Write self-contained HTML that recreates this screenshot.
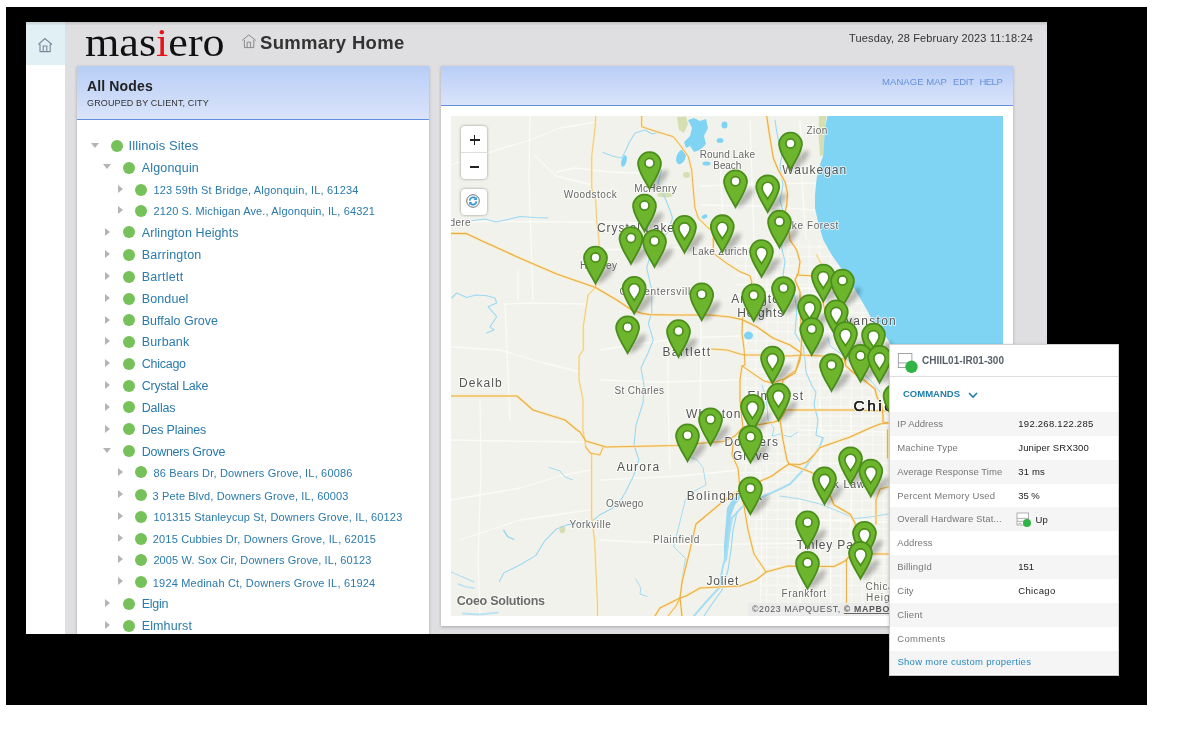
<!DOCTYPE html>
<html><head><meta charset="utf-8"><title>Summary Home</title>
<style>
html,body{margin:0;padding:0}
html{overflow:hidden}
body{width:1200px;height:750px;background:#fff;position:relative;overflow:hidden;font-family:"Liberation Sans",sans-serif}
.t{position:absolute;white-space:nowrap}
.abs{position:absolute}
#black{position:absolute;left:6px;top:7px;width:1141px;height:698px;background:#000}
#app{position:absolute;left:26px;top:22px;width:1021px;height:612px;background:#dfdfe1;overflow:hidden}
#side{position:absolute;left:0;top:0;width:39px;height:612px;background:#fff}
#sidehl{position:absolute;left:0;top:0;width:39px;height:43px;background:#e1f0f5}
.panel{position:absolute;background:#fff;box-shadow:0 1px 3px rgba(0,0,0,.25)}
.phead{position:absolute;left:0;top:0;right:0;background:linear-gradient(#b8cdf6,#dae4fa);border-bottom:1px solid #5f8fdd}
.dot{position:absolute;width:12px;height:12px;border-radius:50%;background:#76c15a}
.ar{position:absolute;width:0;height:0;border-style:solid}
.ar.r{border-width:4.4px 0 4.4px 5.3px;border-color:transparent transparent transparent #b4b4b4}
.ar.d{border-width:5.3px 4.6px 0 4.6px;border-color:#b4b4b4 transparent transparent transparent}
#popup{position:absolute;left:889px;top:344px;width:228px;height:330px;background:#fff;border:1px solid #d0d0d0;border-bottom-color:#c2c2c2;box-shadow:0 1px 3px rgba(0,0,0,.22)}
.row{position:absolute;left:0;width:228px;background:#f5f5f5}
#wrap{position:absolute;left:0;top:0;width:1200px;height:750px;will-change:transform}
</style></head><body>
<div id="wrap">
<div id="black"></div>
<div id="app">
<div id="side"></div><div id="sidehl"></div>

<div class="abs" style="left:0;top:0;width:1021px;height:3px;background:linear-gradient(rgba(0,0,0,.13),rgba(0,0,0,.03))"></div>
<svg class="abs" style="left:11px;top:15px" width="17" height="17" viewBox="0 0 17 17"><path d="M1.4 7.5 L7.8 1.5 L15 7.5 M3 7 V14.6 H13.2 V7 M6.2 14.6 V9 H9.8 V14.6" fill="none" stroke="#7b8997" stroke-width="1.1"/></svg>
<div class="t" style="left:59.2px;top:-5.2px;font-family:'Liberation Serif',serif;font-size:41px;line-height:50px;color:#111;transform:scaleX(1.076);transform-origin:0 0">mas<span style="color:#e8141c">i</span>ero</div>
<svg class="abs" style="left:215px;top:12px" width="17" height="17" viewBox="0 0 17 17"><path d="M1.2 6.5 L7.8 0.9 L14.8 6.5 M3.4 6 V13.6 H12.8 V6 M6.2 13.6 V8.2 H9.6 V13.6" fill="none" stroke="#858585" stroke-width=".95"/></svg>
<div class="t" style="left:234.0px;top:7.5px;font-size:18.5px;line-height:26px;color:#333;font-weight:700;letter-spacing:0.304px;">Summary Home</div>
<div class="t" style="left:823.0px;top:8.5px;font-size:11px;line-height:15px;color:#333;letter-spacing:0.148px;">Tuesday, 28 February 2023 11:18:24</div>
<div class="panel" style="left:51px;top:44px;width:352px;height:600px"><div class="phead" style="height:53px"></div></div>
<div class="t" style="left:61.0px;top:53.9px;font-size:14px;line-height:20px;color:#222;font-weight:700;letter-spacing:0.137px;">All Nodes</div>
<div class="t" style="left:61.0px;top:74.5px;font-size:9px;line-height:13px;color:#333;letter-spacing:0.128px;">GROUPED BY CLIENT, CITY</div>
<div class="ar d" style="left:64.9px;top:120.7px"></div>
<div class="dot" style="left:85.0px;top:118.0px"></div>
<div class="t" style="left:102.5px;top:115.2px;font-size:13px;line-height:18px;color:#2a7aab;letter-spacing:0.090px;">Illinois Sites</div>
<div class="ar d" style="left:76.9px;top:142.3px"></div>
<div class="dot" style="left:97.0px;top:139.6px"></div>
<div class="t" style="left:115.7px;top:136.6px;font-size:12.5px;line-height:18px;color:#2a7aab;letter-spacing:0.188px;">Algonquin</div>
<div class="ar r" style="left:91.7px;top:163.2px"></div>
<div class="dot" style="left:109.0px;top:162.0px"></div>
<div class="t" style="left:127.4px;top:160.7px;font-size:11px;line-height:15px;color:#2a7aab;letter-spacing:0.191px;">123 59th St Bridge, Algonquin, IL, 61234</div>
<div class="ar r" style="left:91.7px;top:184.2px"></div>
<div class="dot" style="left:109.0px;top:183.0px"></div>
<div class="t" style="left:127.4px;top:181.6px;font-size:11px;line-height:15px;color:#2a7aab;letter-spacing:0.138px;">2120 S. Michigan Ave., Algonquin, IL, 64321</div>
<div class="ar r" style="left:79.2px;top:205.6px"></div>
<div class="dot" style="left:97.0px;top:204.4px"></div>
<div class="t" style="left:115.7px;top:201.8px;font-size:12.5px;line-height:18px;color:#2a7aab;letter-spacing:0.101px;">Arlington Heights</div>
<div class="ar r" style="left:79.2px;top:227.7px"></div>
<div class="dot" style="left:97.0px;top:226.5px"></div>
<div class="t" style="left:115.7px;top:223.6px;font-size:12.5px;line-height:18px;color:#2a7aab;letter-spacing:0.213px;">Barrington</div>
<div class="ar r" style="left:79.2px;top:249.7px"></div>
<div class="dot" style="left:97.0px;top:248.5px"></div>
<div class="t" style="left:115.7px;top:245.5px;font-size:12.5px;line-height:18px;color:#2a7aab;letter-spacing:0.275px;">Bartlett</div>
<div class="ar r" style="left:79.2px;top:271.7px"></div>
<div class="dot" style="left:97.0px;top:270.5px"></div>
<div class="t" style="left:115.7px;top:267.6px;font-size:12.5px;line-height:18px;color:#2a7aab;letter-spacing:0.132px;">Bonduel</div>
<div class="ar r" style="left:79.2px;top:293.6px"></div>
<div class="dot" style="left:97.0px;top:292.4px"></div>
<div class="t" style="left:115.7px;top:289.6px;font-size:12.5px;line-height:18px;color:#2a7aab;letter-spacing:0.007px;">Buffalo Grove</div>
<div class="ar r" style="left:79.2px;top:314.8px"></div>
<div class="dot" style="left:97.0px;top:313.6px"></div>
<div class="t" style="left:115.7px;top:310.6px;font-size:12.5px;line-height:18px;color:#2a7aab;letter-spacing:0.163px;">Burbank</div>
<div class="ar r" style="left:79.2px;top:336.8px"></div>
<div class="dot" style="left:97.0px;top:335.6px"></div>
<div class="t" style="left:115.7px;top:332.8px;font-size:12.5px;line-height:18px;color:#2a7aab;letter-spacing:-0.252px;">Chicago</div>
<div class="ar r" style="left:79.2px;top:358.7px"></div>
<div class="dot" style="left:97.0px;top:357.5px"></div>
<div class="t" style="left:115.7px;top:354.6px;font-size:12.5px;line-height:18px;color:#2a7aab;letter-spacing:-0.239px;">Crystal Lake</div>
<div class="ar r" style="left:79.2px;top:380.6px"></div>
<div class="dot" style="left:97.0px;top:379.4px"></div>
<div class="t" style="left:115.7px;top:376.6px;font-size:12.5px;line-height:18px;color:#2a7aab;letter-spacing:-0.189px;">Dallas</div>
<div class="ar r" style="left:79.2px;top:402.6px"></div>
<div class="dot" style="left:97.0px;top:401.4px"></div>
<div class="t" style="left:115.7px;top:398.6px;font-size:12.5px;line-height:18px;color:#2a7aab;letter-spacing:-0.218px;">Des Plaines</div>
<div class="ar d" style="left:76.9px;top:426.0px"></div>
<div class="dot" style="left:97.0px;top:423.3px"></div>
<div class="t" style="left:115.7px;top:421.2px;font-size:12.5px;line-height:18px;color:#2a7aab;letter-spacing:-0.264px;">Downers Grove</div>
<div class="ar r" style="left:91.7px;top:445.6px"></div>
<div class="dot" style="left:109.0px;top:444.4px"></div>
<div class="t" style="left:127.4px;top:443.9px;font-size:11px;line-height:15px;color:#2a7aab;letter-spacing:0.178px;">86 Bears Dr, Downers Grove, IL, 60086</div>
<div class="ar r" style="left:91.7px;top:468.1px"></div>
<div class="dot" style="left:109.0px;top:466.9px"></div>
<div class="t" style="left:126.5px;top:466.8px;font-size:11px;line-height:15px;color:#2a7aab;letter-spacing:0.139px;">3 Pete Blvd, Downers Grove, IL, 60003</div>
<div class="ar r" style="left:91.7px;top:490.2px"></div>
<div class="dot" style="left:109.0px;top:489.0px"></div>
<div class="t" style="left:127.4px;top:487.8px;font-size:11px;line-height:15px;color:#2a7aab;letter-spacing:0.149px;">101315 Stanleycup St, Downers Grove, IL, 60123</div>
<div class="ar r" style="left:91.7px;top:511.7px"></div>
<div class="dot" style="left:109.0px;top:510.5px"></div>
<div class="t" style="left:126.8px;top:509.5px;font-size:11px;line-height:15px;color:#2a7aab;letter-spacing:0.164px;">2015 Cubbies Dr, Downers Grove, IL, 62015</div>
<div class="ar r" style="left:91.7px;top:533.2px"></div>
<div class="dot" style="left:109.0px;top:532.0px"></div>
<div class="t" style="left:127.4px;top:530.8px;font-size:11px;line-height:15px;color:#2a7aab;letter-spacing:0.115px;">2005 W. Sox Cir, Downers Grove, IL, 60123</div>
<div class="ar r" style="left:91.7px;top:554.8px"></div>
<div class="dot" style="left:109.0px;top:553.6px"></div>
<div class="t" style="left:126.8px;top:553.8px;font-size:11px;line-height:15px;color:#2a7aab;letter-spacing:0.184px;">1924 Medinah Ct, Downers Grove IL, 61924</div>
<div class="ar r" style="left:79.2px;top:577.2px"></div>
<div class="dot" style="left:97.0px;top:576.0px"></div>
<div class="t" style="left:115.7px;top:572.7px;font-size:12.5px;line-height:18px;color:#2a7aab;letter-spacing:-0.279px;">Elgin</div>
<div class="ar r" style="left:79.2px;top:599.2px"></div>
<div class="dot" style="left:97.0px;top:598.0px"></div>
<div class="t" style="left:115.7px;top:595.3px;font-size:12.5px;line-height:18px;color:#2a7aab;letter-spacing:0.135px;">Elmhurst</div>
<div class="panel" style="left:415px;top:44px;width:572px;height:560px"><div class="phead" style="height:39px"></div></div>
<div class="t" style="left:856.1px;top:52.9px;font-size:9.5px;line-height:13px;color:#6690dc;letter-spacing:0.040px;">MANAGE MAP</div>
<div class="t" style="left:927.1px;top:52.9px;font-size:9.5px;line-height:13px;color:#6690dc;letter-spacing:-0.247px;">EDIT</div>
<div class="t" style="left:953.4px;top:52.9px;font-size:9.5px;line-height:13px;color:#6690dc;letter-spacing:-0.492px;">HELP</div>
<svg class="abs" style="left:425px;top:94px" width="552" height="500" viewBox="451 116 552 500" font-family="Liberation Sans, sans-serif">
<defs>
<filter id="bl" x="-50%" y="-50%" width="200%" height="200%"><feGaussianBlur stdDeviation="2"/></filter>
<path id="pinb" d="M0 -0.6 C-3 -6.5 -9.2 -15 -10.8 -22.3 A11.4 11.4 0 1 1 10.8 -22.3 C9.2 -15 3 -6.5 0 -0.6Z"/>
<g id="sh"><ellipse cx="9.5" cy="-10" rx="12.5" ry="4.2" transform="rotate(-47 9.5 -10)" fill="#000" opacity=".25" filter="url(#bl)"/></g>
<g id="pc"><use href="#pinb" fill="#6db52d" stroke="#4a8d1a" stroke-width="1.8"/><circle cx="0" cy="-26.5" r="4.55" fill="#fff" stroke="#4a8d1a" stroke-width="1.7"/></g>
<g id="pt"><use href="#pinb" fill="#6db52d" stroke="#4a8d1a" stroke-width="1.8"/><path d="M0 -13.9 C-1.5 -16.8 -5.6 -20.8 -5.6 -24.8 A5.6 5.6 0 1 1 5.6 -24.8 C5.6 -20.8 1.5 -16.8 0 -13.9Z" fill="#fff" stroke="#4a8d1a" stroke-width="1.6"/></g>
</defs>
<rect x="451" y="116" width="552" height="500" fill="#f2f2ec"/>
<path d="M819 116 L826.5 116 L825 128 L823.5 155 L820 156 L818.5 135 Z" fill="#d6dfb2" />
<path d="M677 117 L686 116.5 L688 124 L684 133 L679 130 Z" fill="#d6dfb2" />
<ellipse cx="686.5" cy="175" rx="3.5" ry="3" fill="#d6dfb2" transform="rotate(0 686.5 175)"/>
<ellipse cx="665" cy="195" rx="8" ry="2.5" fill="#d6dfb2" transform="rotate(0 665 195)"/>
<ellipse cx="562.3" cy="529.5" rx="3" ry="3.8" fill="#d6dfb2" transform="rotate(0 562.3 529.5)"/>
<path d="M530 116 L529 180 L531 240 L533 300" fill="none" stroke="#fafaf7" stroke-width="1.3" stroke-linejoin="round" stroke-linecap="round" />
<path d="M451 221.5 L600 222 L690 224" fill="none" stroke="#fafaf7" stroke-width="1.3" stroke-linejoin="round" stroke-linecap="round" />
<path d="M451 165 L490 152 L530 140 L560 128 L596 122" fill="none" stroke="#fafaf7" stroke-width="1.3" stroke-linejoin="round" stroke-linecap="round" />
<path d="M535 156 L556 176 L580 182 L592 185" fill="none" stroke="#fafaf7" stroke-width="1.3" stroke-linejoin="round" stroke-linecap="round" />
<path d="M556 172 L575 168 L610 172 L640 173" fill="none" stroke="#fafaf7" stroke-width="1.3" stroke-linejoin="round" stroke-linecap="round" />
<path d="M505 304 L530 303 L588 304" fill="none" stroke="#fafaf7" stroke-width="1.3" stroke-linejoin="round" stroke-linecap="round" />
<path d="M518 271 L518 300" fill="none" stroke="#fafaf7" stroke-width="1.3" stroke-linejoin="round" stroke-linecap="round" />
<path d="M505 304 L507 350 L510 420" fill="none" stroke="#fafaf7" stroke-width="1.3" stroke-linejoin="round" stroke-linecap="round" />
<path d="M451 347 L500 350 L540 362 L580 372" fill="none" stroke="#fafaf7" stroke-width="1.3" stroke-linejoin="round" stroke-linecap="round" />
<path d="M451 500 L520 488 L560 476 L590 470" fill="none" stroke="#fafaf7" stroke-width="1.3" stroke-linejoin="round" stroke-linecap="round" />
<path d="M451 440 L500 441 L590 442" fill="none" stroke="#fafaf7" stroke-width="1.3" stroke-linejoin="round" stroke-linecap="round" />
<path d="M460 540 L520 520 L590 510" fill="none" stroke="#fafaf7" stroke-width="1.3" stroke-linejoin="round" stroke-linecap="round" />
<path d="M480 400 L481 470 L478 560 L480 616" fill="none" stroke="#fafaf7" stroke-width="1.3" stroke-linejoin="round" stroke-linecap="round" />
<path d="M600 380 L660 382 L740 380" fill="none" stroke="#fafaf7" stroke-width="1.3" stroke-linejoin="round" stroke-linecap="round" />
<path d="M600 350 L680 338 L740 336" fill="none" stroke="#fafaf7" stroke-width="1.3" stroke-linejoin="round" stroke-linecap="round" />
<path d="M700 240 L700 300 L701 340 L700 420" fill="none" stroke="#fafaf7" stroke-width="1.3" stroke-linejoin="round" stroke-linecap="round" />
<path d="M668 320 L668 400 L670 470" fill="none" stroke="#fafaf7" stroke-width="1.3" stroke-linejoin="round" stroke-linecap="round" />
<path d="M600 480 L680 476 L740 470" fill="none" stroke="#fafaf7" stroke-width="1.3" stroke-linejoin="round" stroke-linecap="round" />
<path d="M600 540 L700 545 L800 543" fill="none" stroke="#fafaf7" stroke-width="1.3" stroke-linejoin="round" stroke-linecap="round" />
<path d="M760 470 L762 540 L760 616" fill="none" stroke="#fafaf7" stroke-width="1.3" stroke-linejoin="round" stroke-linecap="round" />
<path d="M800 500 L801 560 L800 616" fill="none" stroke="#fafaf7" stroke-width="1.3" stroke-linejoin="round" stroke-linecap="round" />
<path d="M830 510 L831 616" fill="none" stroke="#fafaf7" stroke-width="1.3" stroke-linejoin="round" stroke-linecap="round" />
<path d="M600 250 L660 248 L740 246 L790 244" fill="none" stroke="#fafaf7" stroke-width="1.3" stroke-linejoin="round" stroke-linecap="round" />
<path d="M720 160 L722 200 L724 240" fill="none" stroke="#fafaf7" stroke-width="1.3" stroke-linejoin="round" stroke-linecap="round" />
<path d="M750 120 L752 180 L754 240" fill="none" stroke="#fafaf7" stroke-width="1.3" stroke-linejoin="round" stroke-linecap="round" />
<path d="M800 120 L802 180 L806 240" fill="none" stroke="#fafaf7" stroke-width="1.3" stroke-linejoin="round" stroke-linecap="round" />
<path d="M700 186 L760 184 L815 183" fill="none" stroke="#fafaf7" stroke-width="1.3" stroke-linejoin="round" stroke-linecap="round" />
<path d="M700 205 L760 206 L815 210" fill="none" stroke="#fafaf7" stroke-width="1.3" stroke-linejoin="round" stroke-linecap="round" />
<path d="M760 290 L800 288 L850 290" fill="none" stroke="#fafaf7" stroke-width="1.3" stroke-linejoin="round" stroke-linecap="round" />
<path d="M760 372 L800 372 L870 374" fill="none" stroke="#fafaf7" stroke-width="1.3" stroke-linejoin="round" stroke-linecap="round" />
<path d="M820 400 L822 440 L820 470" fill="none" stroke="#fafaf7" stroke-width="1.3" stroke-linejoin="round" stroke-linecap="round" />
<path d="M850 400 L852 470 L850 540" fill="none" stroke="#fafaf7" stroke-width="1.3" stroke-linejoin="round" stroke-linecap="round" />
<path d="M800 430 L888 432" fill="none" stroke="#fafaf7" stroke-width="1.3" stroke-linejoin="round" stroke-linecap="round" />
<path d="M800 520 L888 522" fill="none" stroke="#fafaf7" stroke-width="1.3" stroke-linejoin="round" stroke-linecap="round" />
<defs><pattern id="grid" width="10.6" height="9.4" patternUnits="userSpaceOnUse" patternTransform="translate(3 2)"><path d="M0 .6 H10.6 M.6 0 V9.4" stroke="#fff" stroke-width="1.1" fill="none"/></pattern><clipPath id="urb"><path d="M744 240 L735 262 L738 330 L743 366 L740 470 L744 506 L754 560 L770 616 L1003 616 L1003 240Z"/></clipPath></defs>
<rect x="660" y="240" width="343" height="376" fill="url(#grid)" opacity=".5" clip-path="url(#urb)"/>
<path d="M827.5 116 L825 128 L823.3 155 L820 165 L816.7 178 L815 195 L815 208 L818.3 223 L823.3 240 L831.7 255 L840 266.7 L847 277 L857 293 L867 310 L873 322 L883 332 L890 343 L897 360 L903 380 L906 400 L910 430 L925 470 L945 500 L975 540 L1003 560 L1003 116 Z" fill="#7fd4f4" />
<path d="M688 120 L694 118 L700 121 L706 119 L708 128 L704 136 L706 144 L700 150 L694 152 L690 146 L686 148 L684 142 L690 136 L692 128 Z" fill="#7fd4f4" />
<ellipse cx="681" cy="157" rx="4.5" ry="7.5" fill="#7fd4f4" transform="rotate(20 681 157)"/>
<ellipse cx="724.5" cy="125" rx="3" ry="3.5" fill="#7fd4f4" transform="rotate(0 724.5 125)"/>
<ellipse cx="720" cy="140.5" rx="3.5" ry="2.5" fill="#7fd4f4" transform="rotate(0 720 140.5)"/>
<ellipse cx="706.5" cy="163.5" rx="4" ry="2" fill="#7fd4f4" transform="rotate(0 706.5 163.5)"/>
<ellipse cx="704.5" cy="216.5" rx="3" ry="2" fill="#7fd4f4" transform="rotate(-25 704.5 216.5)"/>
<ellipse cx="748.5" cy="335.5" rx="4.5" ry="4" fill="#7fd4f4" transform="rotate(0 748.5 335.5)"/>
<ellipse cx="624" cy="161" rx="2.5" ry="6" fill="#7fd4f4" transform="rotate(15 624 161)"/>
<path d="M727 508 L732 500 L740 493 L742 496 L735 505 L731 516 L729 540 L727 560 L724 564 L724 545 Z" fill="#9bd9f2" />
<path d="M471.7 220.8 L485 219 L496 222 L510 219 L520 216.5 L535 217.5 L548 218" fill="none" stroke="#9bd9f2" stroke-width="1.1" stroke-linejoin="round" stroke-linecap="round" />
<path d="M603 152.5 L612 156 L621.7 158 L626 150 L629 143 L635 133 L645 130 L652 134 L660 132" fill="none" stroke="#9bd9f2" stroke-width="1.1" stroke-linejoin="round" stroke-linecap="round" />
<path d="M661.7 170 L658 182 L665 198 L670 210 L672.5 218 L668 232 L656.7 245 L650 256 L646.7 268 L651.7 290 L651.7 313.3 L648.3 323.3 L653.3 340 L648 353 L641 368 L644 385 L643 403 L636 425 L634 445 L639 460 L633 477 L625 493 L621 499.7 L612 508.5 L600.4 514.4 L591.6 521.7 L580 523.5 L568 524.6 L556.4 529 L544.7 540.8 L535.9 555.4 L521.2 564.2 L503.7 573 L499.3 581.8" fill="none" stroke="#9bd9f2" stroke-width="1.1" stroke-linejoin="round" stroke-linecap="round" />
<path d="M451.7 298 L456.7 293 L466.7 297.5 L476 295 L486.7 295.8 L495 298 L496.7 303 L488 306.7 L496.7 316.7 L490 326.7 L494 330 L486.7 333" fill="none" stroke="#9bd9f2" stroke-width="1.1" stroke-linejoin="round" stroke-linecap="round" />
<path d="M775 120 L776.7 131.7 L781.7 156.7 L780 166 L783 185 L780 200 L784 215 L781.7 248 L785 261.7 L783 275 L795 296.7 L796.7 311.7 L795 333.3 L803.3 346.7 L805 360 L806 372 L812 386 L816 392 L814 405 L818 420 L816 435 L823 438 L820 446 L805 468" fill="none" stroke="#9bd9f2" stroke-width="1.1" stroke-linejoin="round" stroke-linecap="round" />
<path d="M828 338 L830 346 L840 353 L850 362 L862 372 L872 382 L880 392" fill="none" stroke="#9bd9f2" stroke-width="0.9" stroke-linejoin="round" stroke-linecap="round" />
<path d="M855 518.5 L870 517 L888 514" fill="none" stroke="#9bd9f2" stroke-width="0.9" stroke-linejoin="round" stroke-linecap="round" />
<path d="M780 496 L800 499 L820 504 L840 512 L855 518.5" fill="none" stroke="#9bd9f2" stroke-width="0.9" stroke-linejoin="round" stroke-linecap="round" />
<path d="M688.4 455.7 L697 460 L703 467.4 L706 485 L694.3 491 L685.5 499.7 L679.6 523 L673.7 546.6 L685.5 558.4 L682.5 576 L679.6 599.4" fill="none" stroke="#9bd9f2" stroke-width="0.9" stroke-linejoin="round" stroke-linecap="round" />
<path d="M549.1 467.4 L560 471 L565 477 L572.6 479.8" fill="none" stroke="#9bd9f2" stroke-width="0.9" stroke-linejoin="round" stroke-linecap="round" />
<path d="M635.6 578.9 L641 588 L640 594 L647.3 596.5" fill="none" stroke="#9bd9f2" stroke-width="0.9" stroke-linejoin="round" stroke-linecap="round" />
<path d="M503.7 530.5 L508 537 L513.9 539.3" fill="none" stroke="#9bd9f2" stroke-width="1.4" stroke-linejoin="round" stroke-linecap="round" />
<path d="M451 572 L465 578 L474 582" fill="none" stroke="#9bd9f2" stroke-width="0.9" stroke-linejoin="round" stroke-linecap="round" />
<path d="M458 584 L466 587 L474 588" fill="none" stroke="#b9e2f3" stroke-width="1.6" stroke-linejoin="round" stroke-linecap="round" />
<path d="M463 613.5 L480 614.5 L498 612.5" fill="none" stroke="#b9e2f3" stroke-width="1.8" stroke-linejoin="round" stroke-linecap="round" />
<path d="M762 385 L765 395 L767 405 L768 420 L774 428 L772 436 L780 434 L790 437 L798 432" fill="none" stroke="#9bd9f2" stroke-width="0.9" stroke-linejoin="round" stroke-linecap="round" />
<path d="M823 438 L820 446 L805 468 L790 484 L780 489 L760 498 L742 507 L732 518 L729 535 L727 552 L723 566 L719 588 L706 602 L694 616" fill="none" stroke="#a6def4" stroke-width="2" stroke-linejoin="round" stroke-linecap="round" />
<path d="M737 512 L733 530 L731 550 L728 570 L722 590 L712 604 L704 616" fill="none" stroke="#9bd9f2" stroke-width="1.2" stroke-linejoin="round" stroke-linecap="round" />
<path d="M595.8 116 L595 128 L591.7 156.7 L591.7 188 L595.8 201.7 L596.7 221.7 L599 240 L599 262 L595.5 287.5 L588 295 L585.8 310 L583.3 326.7 L583.3 350 L579 356 L579 380 L583 400 L582.8 429 L585.8 447 L591.6 454 L591.6 517 L594.6 541 L597.5 605 L597.5 616" fill="none" stroke="#fbeac0" stroke-width="2.2" stroke-linejoin="round" stroke-linecap="round" />
<path d="M641.7 116 L641.7 126.7 L656.7 131.7 L673.3 136.7 L680 145 L688.3 156.7 L691.7 170 L693.3 190 L695 208 L698.3 218 L706.7 226.7 L713.3 231.7 L713.3 240" fill="none" stroke="#fbe8b8" stroke-width="2.4" stroke-linejoin="round" stroke-linecap="round" />
<path d="M713.3 240 L713.3 253.3 L726.7 263.3 L740 271.7 L750 275.8 L751.7 281.7 L750 300 L744 315 L742.5 319.7 L742 333.3 L744 348.3 L745 365 L742 366 L740 380 L740 400 L742 420 L743 427 L738 440 L733 444 L732 455 L738 468 L740 490 L744 506 L748 530 L754 554 L766 572" fill="none" stroke="#fbe8b8" stroke-width="2.5" stroke-linejoin="round" stroke-linecap="round" />
<path d="M766.7 116 L769 131.7 L771.7 148 L773.3 158 L778.3 170 L785 181.7 L787.5 193 L786.7 205 L785 211.7 L789 231.7 L790 240 L796.7 250 L800 261.7 L798.3 273.3 L795 280 L800 291.7 L800.8 323 L801.7 340 L800.8 353.3 L800 360 L795 373 L783 380 L781 395 L782 410 L780 420 L783 440 L787 460 L789 464 L800 468 L813 473 L822 484 L830 495 L834 505 L836 506 L850 514 L855 523 L858 540 L849 557" fill="none" stroke="#fbe8b8" stroke-width="2.6" stroke-linejoin="round" stroke-linecap="round" />
<path d="M796.7 275 L811.7 275.8 L818 285 L825 310 L838 340 L846 362" fill="none" stroke="#fbe8b8" stroke-width="2.5" stroke-linejoin="round" stroke-linecap="round" />
<path d="M816.7 255 L820.8 263.3 L822 272" fill="none" stroke="#fbeac0" stroke-width="2.1" stroke-linejoin="round" stroke-linecap="round" />
<path d="M451 233.3 L466.7 233.7 L480 240 L516.7 256.7 L556.7 274 L595.5 287.5 L616.7 300 L631.7 310 L641.7 313.3 L650 314.7 L673.3 315 L710 315 L730 317 L742.5 319.7 L756.7 326.7 L773.3 338.3 L790 345 L800 352 L802 355 L822 356 L844 359 L846 366 L855 374 L865 381 L875 389 L877 397 L881.5 405 L883 415 L883 422 L888 423" fill="none" stroke="#fbe8b8" stroke-width="2.7" stroke-linejoin="round" stroke-linecap="round" />
<path d="M711.7 349 L726.7 350 L740 354 L744 355 L760 355 L790 356 L802 355" fill="none" stroke="#fbe8b8" stroke-width="2.4" stroke-linejoin="round" stroke-linecap="round" />
<path d="M742 366 L764 381 L772 383 L784 379 L796 370 L800 356" fill="none" stroke="#fbe8b8" stroke-width="2.5" stroke-linejoin="round" stroke-linecap="round" />
<path d="M786 410 L854 410 L882 411 L900 411" fill="none" stroke="#fbe8b8" stroke-width="2.6" stroke-linejoin="round" stroke-linecap="round" />
<path d="M451 396 L517 396 L533 410 L565 420 L577 430 L580 432 L585.8 441 L606 447 L676.7 445.5 L709 442.5 L723.6 441.5 L735 436 L743 427 L757 425 L774 422 L780 420 L786 410" fill="none" stroke="#fbe8b8" stroke-width="2.6" stroke-linejoin="round" stroke-linecap="round" />
<path d="M585.8 447 L590 453 L600 455 L603 447" fill="none" stroke="#fbe8b8" stroke-width="2.3" stroke-linejoin="round" stroke-linecap="round" />
<path d="M888 423 L880 424 L870 428 L850 437 L820 447.5 L814 455 L807 462 L800 464.5 L789 464 L780 470 L772 476 L740 490 L720 504 L696 524 L690 550 L682 582 L680 598 L682 616" fill="none" stroke="#fbe8b8" stroke-width="2.6" stroke-linejoin="round" stroke-linecap="round" />
<path d="M655 616 L660 608 L680 598 L686 596 L700 588 L740 586 L756 580 L766 572 L788 566 L834 566.5 L845 561 L849 557 L860 554 L873 554 L888 554" fill="none" stroke="#fbe8b8" stroke-width="2.6" stroke-linejoin="round" stroke-linecap="round" />
<path d="M846.5 560 L846.5 616" fill="none" stroke="#fbe8b8" stroke-width="2.4" stroke-linejoin="round" stroke-linecap="round" />
<path d="M876 500 L876 524" fill="none" stroke="#fbe8b8" stroke-width="2.4" stroke-linejoin="round" stroke-linecap="round" />
<path d="M888 487 L880 489 L876 500" fill="none" stroke="#fbe8b8" stroke-width="2.4" stroke-linejoin="round" stroke-linecap="round" />
<path d="M887.5 430 L887.5 458" fill="none" stroke="#fbe8b8" stroke-width="2.4" stroke-linejoin="round" stroke-linecap="round" />
<path d="M680 598 L676 606 L668 616" fill="none" stroke="#fbe8b8" stroke-width="2.4" stroke-linejoin="round" stroke-linecap="round" />
<path d="M595.8 116 L595 128 L591.7 156.7 L591.7 188 L595.8 201.7 L596.7 221.7 L599 240 L599 262 L595.5 287.5 L588 295 L585.8 310 L583.3 326.7 L583.3 350 L579 356 L579 380 L583 400 L582.8 429 L585.8 447 L591.6 454 L591.6 517 L594.6 541 L597.5 605 L597.5 616" fill="none" stroke="#ecc26e" stroke-width="0.75" stroke-linejoin="round" stroke-linecap="round" />
<path d="M641.7 116 L641.7 126.7 L656.7 131.7 L673.3 136.7 L680 145 L688.3 156.7 L691.7 170 L693.3 190 L695 208 L698.3 218 L706.7 226.7 L713.3 231.7 L713.3 240" fill="none" stroke="#e9ad45" stroke-width="0.9" stroke-linejoin="round" stroke-linecap="round" />
<path d="M713.3 240 L713.3 253.3 L726.7 263.3 L740 271.7 L750 275.8 L751.7 281.7 L750 300 L744 315 L742.5 319.7 L742 333.3 L744 348.3 L745 365 L742 366 L740 380 L740 400 L742 420 L743 427 L738 440 L733 444 L732 455 L738 468 L740 490 L744 506 L748 530 L754 554 L766 572" fill="none" stroke="#e9ad45" stroke-width="1" stroke-linejoin="round" stroke-linecap="round" />
<path d="M766.7 116 L769 131.7 L771.7 148 L773.3 158 L778.3 170 L785 181.7 L787.5 193 L786.7 205 L785 211.7 L789 231.7 L790 240 L796.7 250 L800 261.7 L798.3 273.3 L795 280 L800 291.7 L800.8 323 L801.7 340 L800.8 353.3 L800 360 L795 373 L783 380 L781 395 L782 410 L780 420 L783 440 L787 460 L789 464 L800 468 L813 473 L822 484 L830 495 L834 505 L836 506 L850 514 L855 523 L858 540 L849 557" fill="none" stroke="#e9ad45" stroke-width="1.1" stroke-linejoin="round" stroke-linecap="round" />
<path d="M796.7 275 L811.7 275.8 L818 285 L825 310 L838 340 L846 362" fill="none" stroke="#e9ad45" stroke-width="1" stroke-linejoin="round" stroke-linecap="round" />
<path d="M816.7 255 L820.8 263.3 L822 272" fill="none" stroke="#ecc26e" stroke-width="0.65" stroke-linejoin="round" stroke-linecap="round" />
<path d="M451 233.3 L466.7 233.7 L480 240 L516.7 256.7 L556.7 274 L595.5 287.5 L616.7 300 L631.7 310 L641.7 313.3 L650 314.7 L673.3 315 L710 315 L730 317 L742.5 319.7 L756.7 326.7 L773.3 338.3 L790 345 L800 352 L802 355 L822 356 L844 359 L846 366 L855 374 L865 381 L875 389 L877 397 L881.5 405 L883 415 L883 422 L888 423" fill="none" stroke="#e9ad45" stroke-width="1.2" stroke-linejoin="round" stroke-linecap="round" />
<path d="M711.7 349 L726.7 350 L740 354 L744 355 L760 355 L790 356 L802 355" fill="none" stroke="#e9ad45" stroke-width="0.9" stroke-linejoin="round" stroke-linecap="round" />
<path d="M742 366 L764 381 L772 383 L784 379 L796 370 L800 356" fill="none" stroke="#e9ad45" stroke-width="1" stroke-linejoin="round" stroke-linecap="round" />
<path d="M786 410 L854 410 L882 411 L900 411" fill="none" stroke="#e9ad45" stroke-width="1.1" stroke-linejoin="round" stroke-linecap="round" />
<path d="M451 396 L517 396 L533 410 L565 420 L577 430 L580 432 L585.8 441 L606 447 L676.7 445.5 L709 442.5 L723.6 441.5 L735 436 L743 427 L757 425 L774 422 L780 420 L786 410" fill="none" stroke="#e9ad45" stroke-width="1.1" stroke-linejoin="round" stroke-linecap="round" />
<path d="M585.8 447 L590 453 L600 455 L603 447" fill="none" stroke="#e9ad45" stroke-width="0.8" stroke-linejoin="round" stroke-linecap="round" />
<path d="M888 423 L880 424 L870 428 L850 437 L820 447.5 L814 455 L807 462 L800 464.5 L789 464 L780 470 L772 476 L740 490 L720 504 L696 524 L690 550 L682 582 L680 598 L682 616" fill="none" stroke="#e9ad45" stroke-width="1.1" stroke-linejoin="round" stroke-linecap="round" />
<path d="M655 616 L660 608 L680 598 L686 596 L700 588 L740 586 L756 580 L766 572 L788 566 L834 566.5 L845 561 L849 557 L860 554 L873 554 L888 554" fill="none" stroke="#e9ad45" stroke-width="1.1" stroke-linejoin="round" stroke-linecap="round" />
<path d="M846.5 560 L846.5 616" fill="none" stroke="#e9ad45" stroke-width="0.9" stroke-linejoin="round" stroke-linecap="round" />
<path d="M876 500 L876 524" fill="none" stroke="#e9ad45" stroke-width="0.9" stroke-linejoin="round" stroke-linecap="round" />
<path d="M888 487 L880 489 L876 500" fill="none" stroke="#e9ad45" stroke-width="0.9" stroke-linejoin="round" stroke-linecap="round" />
<path d="M887.5 430 L887.5 458" fill="none" stroke="#e9ad45" stroke-width="0.9" stroke-linejoin="round" stroke-linecap="round" />
<path d="M680 598 L676 606 L668 616" fill="none" stroke="#e9ad45" stroke-width="0.9" stroke-linejoin="round" stroke-linecap="round" />
<text x="806.6" y="133.88" font-size="10" textLength="20.7" lengthAdjust="spacing" fill="#666" stroke="#fff" stroke-width="1.8" stroke-opacity=".75" stroke-linejoin="round" paint-order="stroke" >Zion</text>
<text x="699.7" y="157.78" font-size="10" textLength="55.3" lengthAdjust="spacing" fill="#666" stroke="#fff" stroke-width="1.8" stroke-opacity=".75" stroke-linejoin="round" paint-order="stroke" >Round Lake</text>
<text x="713.3" y="168.58" font-size="10" textLength="28" lengthAdjust="spacing" fill="#666" stroke="#fff" stroke-width="1.8" stroke-opacity=".75" stroke-linejoin="round" paint-order="stroke" >Beach</text>
<text x="782.3" y="174.496" font-size="12" textLength="63.9" lengthAdjust="spacing" fill="#555" stroke="#fff" stroke-width="1.8" stroke-opacity=".75" stroke-linejoin="round" paint-order="stroke" >Waukegan</text>
<text x="563.7" y="197.78" font-size="10" textLength="53" lengthAdjust="spacing" fill="#666" stroke="#fff" stroke-width="1.8" stroke-opacity=".75" stroke-linejoin="round" paint-order="stroke" >Woodstock</text>
<text x="634.2" y="191.88" font-size="10" textLength="42.5" lengthAdjust="spacing" fill="#666" stroke="#fff" stroke-width="1.8" stroke-opacity=".75" stroke-linejoin="round" paint-order="stroke" >McHenry</text>
<text x="597" y="232.496" font-size="12" textLength="77" lengthAdjust="spacing" fill="#555" stroke="#fff" stroke-width="1.8" stroke-opacity=".75" stroke-linejoin="round" paint-order="stroke" >Crystal Lake</text>
<text x="779.4" y="228.68" font-size="10" textLength="59" lengthAdjust="spacing" fill="#666" stroke="#fff" stroke-width="1.8" stroke-opacity=".75" stroke-linejoin="round" paint-order="stroke" >Lake Forest</text>
<text x="692.3" y="255.18" font-size="10" textLength="55.2" lengthAdjust="spacing" fill="#666" stroke="#fff" stroke-width="1.8" stroke-opacity=".75" stroke-linejoin="round" paint-order="stroke" >Lake Zurich</text>
<text x="580" y="269.38" font-size="10" textLength="37.1" lengthAdjust="spacing" fill="#666" stroke="#fff" stroke-width="1.8" stroke-opacity=".75" stroke-linejoin="round" paint-order="stroke" >Huntley</text>
<text x="619.6" y="294.78" font-size="10" textLength="76.9" lengthAdjust="spacing" fill="#666" stroke="#fff" stroke-width="1.8" stroke-opacity=".75" stroke-linejoin="round" paint-order="stroke" >Carpentersville</text>
<text x="731.3" y="303.096" font-size="12" textLength="55.2" lengthAdjust="spacing" fill="#555" stroke="#fff" stroke-width="1.8" stroke-opacity=".75" stroke-linejoin="round" paint-order="stroke" >Arlington</text>
<text x="737.2" y="316.796" font-size="12" textLength="46.1" lengthAdjust="spacing" fill="#555" stroke="#fff" stroke-width="1.8" stroke-opacity=".75" stroke-linejoin="round" paint-order="stroke" >Heights</text>
<text x="836.6" y="325.096" font-size="12" textLength="59.2" lengthAdjust="spacing" fill="#555" stroke="#fff" stroke-width="1.8" stroke-opacity=".75" stroke-linejoin="round" paint-order="stroke" >Evanston</text>
<text x="662.5" y="356.396" font-size="12" textLength="47.5" lengthAdjust="spacing" fill="#555" stroke="#fff" stroke-width="1.8" stroke-opacity=".75" stroke-linejoin="round" paint-order="stroke" >Bartlett</text>
<text x="459" y="387.096" font-size="12" textLength="42.6" lengthAdjust="spacing" fill="#555" stroke="#fff" stroke-width="1.8" stroke-opacity=".75" stroke-linejoin="round" paint-order="stroke" >Dekalb</text>
<text x="614.6" y="394.18" font-size="10" textLength="49.4" lengthAdjust="spacing" fill="#666" stroke="#fff" stroke-width="1.8" stroke-opacity=".75" stroke-linejoin="round" paint-order="stroke" >St Charles</text>
<text x="747.6" y="399.896" font-size="12" textLength="55.4" lengthAdjust="spacing" fill="#555" stroke="#fff" stroke-width="1.8" stroke-opacity=".75" stroke-linejoin="round" paint-order="stroke" >Elmhurst</text>
<text x="686" y="418.296" font-size="12" textLength="54.5" lengthAdjust="spacing" fill="#555" stroke="#fff" stroke-width="1.8" stroke-opacity=".75" stroke-linejoin="round" paint-order="stroke" >Wheaton</text>
<text x="724.5" y="445.796" font-size="12" textLength="53.5" lengthAdjust="spacing" fill="#555" stroke="#fff" stroke-width="1.8" stroke-opacity=".75" stroke-linejoin="round" paint-order="stroke" >Downers</text>
<text x="733" y="460.096" font-size="12" textLength="36" lengthAdjust="spacing" fill="#555" stroke="#fff" stroke-width="1.8" stroke-opacity=".75" stroke-linejoin="round" paint-order="stroke" >Grove</text>
<text x="616.9" y="471.396" font-size="12" textLength="42.2" lengthAdjust="spacing" fill="#555" stroke="#fff" stroke-width="1.8" stroke-opacity=".75" stroke-linejoin="round" paint-order="stroke" >Aurora</text>
<text x="817.8" y="488.259" font-size="10.5" textLength="53.4" lengthAdjust="spacing" fill="#555" stroke="#fff" stroke-width="1.8" stroke-opacity=".75" stroke-linejoin="round" paint-order="stroke" >Oak Lawn</text>
<text x="686.7" y="499.596" font-size="12" textLength="75.3" lengthAdjust="spacing" fill="#555" stroke="#fff" stroke-width="1.8" stroke-opacity=".75" stroke-linejoin="round" paint-order="stroke" >Bolingbrook</text>
<text x="606" y="506.68" font-size="10" textLength="37.3" lengthAdjust="spacing" fill="#666" stroke="#fff" stroke-width="1.8" stroke-opacity=".75" stroke-linejoin="round" paint-order="stroke" >Oswego</text>
<text x="569.6" y="528.18" font-size="10" textLength="41.1" lengthAdjust="spacing" fill="#666" stroke="#fff" stroke-width="1.8" stroke-opacity=".75" stroke-linejoin="round" paint-order="stroke" >Yorkville</text>
<text x="653" y="542.88" font-size="10" textLength="46.3" lengthAdjust="spacing" fill="#666" stroke="#fff" stroke-width="1.8" stroke-opacity=".75" stroke-linejoin="round" paint-order="stroke" >Plainfield</text>
<text x="796.5" y="548.796" font-size="12" textLength="68" lengthAdjust="spacing" fill="#555" stroke="#fff" stroke-width="1.8" stroke-opacity=".75" stroke-linejoin="round" paint-order="stroke" >Tinley Park</text>
<text x="706.4" y="584.796" font-size="12" textLength="32" lengthAdjust="spacing" fill="#555" stroke="#fff" stroke-width="1.8" stroke-opacity=".75" stroke-linejoin="round" paint-order="stroke" >Joliet</text>
<text x="781.6" y="597.08" font-size="10" textLength="44.4" lengthAdjust="spacing" fill="#666" stroke="#fff" stroke-width="1.8" stroke-opacity=".75" stroke-linejoin="round" paint-order="stroke" >Frankfort</text>
<text x="865.6" y="589.58" font-size="10" textLength="40.4" lengthAdjust="spacing" fill="#666" stroke="#fff" stroke-width="1.8" stroke-opacity=".75" stroke-linejoin="round" paint-order="stroke" >Chicago</text>
<text x="866" y="600.58" font-size="10" textLength="40" lengthAdjust="spacing" fill="#666" stroke="#fff" stroke-width="1.8" stroke-opacity=".75" stroke-linejoin="round" paint-order="stroke" >Heights</text>
<text x="447" y="226.38" font-size="10" textLength="23.5" lengthAdjust="spacing" fill="#666" stroke="#fff" stroke-width="1.8" stroke-opacity=".75" stroke-linejoin="round" paint-order="stroke" >idere</text>
<text x="853.5" y="410.6" font-size="15.5" textLength="72" lengthAdjust="spacing" fill="#222" stroke="#fff" stroke-width="2.2" stroke-opacity=".8" stroke-linejoin="round" paint-order="stroke">Chicago</text>
<text x="853.5" y="410.6" font-size="15.5" textLength="72" lengthAdjust="spacing" fill="#222" stroke="#222" stroke-width=".25">Chicago</text>
<text x="456.7" y="604.6" font-size="12.6" font-weight="700" fill="#6b6b6b" textLength="88.4" lengthAdjust="spacing" stroke="#fff" stroke-width="1.5" stroke-opacity=".7" paint-order="stroke">Coeo Solutions</text>
<rect x="748" y="603" width="255" height="13" fill="#e9e9ea" fill-opacity=".88"/>
<text x="752" y="612" font-size="8.8" fill="#555" letter-spacing=".63">©2023 MAPQUEST, <tspan font-weight="700" text-decoration="underline">© MAPBOX</tspan></text>
<use href="#sh" x="790.5" y="170"/>
<use href="#sh" x="649.5" y="189.5"/>
<use href="#sh" x="735.5" y="207.7"/>
<use href="#sh" x="767.7" y="212.7"/>
<use href="#sh" x="644.5" y="232"/>
<use href="#sh" x="779.5" y="248"/>
<use href="#sh" x="722.3" y="252.6"/>
<use href="#sh" x="684.5" y="253.3"/>
<use href="#sh" x="631" y="264.5"/>
<use href="#sh" x="654.5" y="267.5"/>
<use href="#sh" x="761.5" y="277.5"/>
<use href="#sh" x="595.5" y="284"/>
<use href="#sh" x="823.3" y="302"/>
<use href="#sh" x="842.5" y="307"/>
<use href="#sh" x="634.2" y="314.2"/>
<use href="#sh" x="783.5" y="314.5"/>
<use href="#sh" x="701.7" y="320.8"/>
<use href="#sh" x="753.7" y="321.7"/>
<use href="#sh" x="809.5" y="332.5"/>
<use href="#sh" x="836.3" y="337.8"/>
<use href="#sh" x="627.6" y="353.7"/>
<use href="#sh" x="811.7" y="355.5"/>
<use href="#sh" x="678.5" y="357.5"/>
<use href="#sh" x="845.5" y="359.5"/>
<use href="#sh" x="873.5" y="361"/>
<use href="#sh" x="860.5" y="382.2"/>
<use href="#sh" x="879.5" y="383.3"/>
<use href="#sh" x="772.5" y="384"/>
<use href="#sh" x="831.5" y="391.5"/>
<use href="#sh" x="778.5" y="421"/>
<use href="#sh" x="895" y="422"/>
<use href="#sh" x="752.5" y="432.2"/>
<use href="#sh" x="710.5" y="445.7"/>
<use href="#sh" x="687.5" y="461.8"/>
<use href="#sh" x="750.5" y="463.2"/>
<use href="#sh" x="850.5" y="484.7"/>
<use href="#sh" x="870.8" y="497"/>
<use href="#sh" x="824.5" y="504.8"/>
<use href="#sh" x="750.4" y="514.7"/>
<use href="#sh" x="807.5" y="548.8"/>
<use href="#sh" x="864.5" y="559.3"/>
<use href="#sh" x="860.5" y="579.3"/>
<use href="#sh" x="807.5" y="589.2"/>
<use href="#pc" x="790.5" y="170"/>
<use href="#pc" x="649.5" y="189.5"/>
<use href="#pc" x="735.5" y="207.7"/>
<use href="#pt" x="767.7" y="212.7"/>
<use href="#pc" x="644.5" y="232"/>
<use href="#pc" x="779.5" y="248"/>
<use href="#pt" x="722.3" y="252.6"/>
<use href="#pt" x="684.5" y="253.3"/>
<use href="#pc" x="631" y="264.5"/>
<use href="#pc" x="654.5" y="267.5"/>
<use href="#pt" x="761.5" y="277.5"/>
<use href="#pc" x="595.5" y="284"/>
<use href="#pt" x="823.3" y="302"/>
<use href="#pc" x="842.5" y="307"/>
<use href="#pt" x="634.2" y="314.2"/>
<use href="#pc" x="783.5" y="314.5"/>
<use href="#pc" x="701.7" y="320.8"/>
<use href="#pc" x="753.7" y="321.7"/>
<use href="#pt" x="809.5" y="332.5"/>
<use href="#pt" x="836.3" y="337.8"/>
<use href="#pc" x="627.6" y="353.7"/>
<use href="#pc" x="811.7" y="355.5"/>
<use href="#pc" x="678.5" y="357.5"/>
<use href="#pt" x="845.5" y="359.5"/>
<use href="#pt" x="873.5" y="361"/>
<use href="#pc" x="860.5" y="382.2"/>
<use href="#pt" x="879.5" y="383.3"/>
<use href="#pt" x="772.5" y="384"/>
<use href="#pc" x="831.5" y="391.5"/>
<use href="#pt" x="778.5" y="421"/>
<use href="#pc" x="895" y="422"/>
<use href="#pt" x="752.5" y="432.2"/>
<use href="#pc" x="710.5" y="445.7"/>
<use href="#pc" x="687.5" y="461.8"/>
<use href="#pc" x="750.5" y="463.2"/>
<use href="#pt" x="850.5" y="484.7"/>
<use href="#pt" x="870.8" y="497"/>
<use href="#pt" x="824.5" y="504.8"/>
<use href="#pc" x="750.4" y="514.7"/>
<use href="#pc" x="807.5" y="548.8"/>
<use href="#pt" x="864.5" y="559.3"/>
<use href="#pt" x="860.5" y="579.3"/>
<use href="#pc" x="807.5" y="589.2"/>
</svg>
<div class="abs" style="left:435px;top:104px;width:26px;height:53px;background:#fff;border-radius:4px;box-shadow:0 0 3px rgba(0,0,0,.4)"><div class="abs" style="left:0;top:26px;width:26px;height:1px;background:#ddd"></div><div class="abs" style="left:8.6px;top:13.4px;width:10px;height:1.8px;background:#222"></div><div class="abs" style="left:12.7px;top:9.3px;width:1.8px;height:10px;background:#222"></div><div class="abs" style="left:9.2px;top:39.7px;width:8.8px;height:2px;background:#222"></div></div>
<div class="abs" style="left:435px;top:167px;width:26px;height:26px;background:#fff;border-radius:4px;box-shadow:0 0 3px rgba(0,0,0,.4)"><svg class="abs" style="left:5.4px;top:4.7px" width="14" height="14" viewBox="0 0 14 14"><circle cx="7" cy="7" r="6.3" fill="none" stroke="#44525e" stroke-width=".8"/><path d="M3.6 6.6 A3.5 3.5 0 0 1 9.6 4.4 M10.4 7.4 A3.5 3.5 0 0 1 4.4 9.6" fill="none" stroke="#2b95d6" stroke-width="1.7"/><path d="M10.9 2.9 V6 H7.8Z M3.1 11.1 V8 H6.2Z" fill="#2b95d6"/></svg></div>
</div>
<div id="popup">
<div class="row" style="top:67.0px;height:23.9px"></div>
<div class="row" style="top:114.7px;height:23.9px"></div>
<div class="row" style="top:162.4px;height:23.9px"></div>
<div class="row" style="top:210.2px;height:23.9px"></div>
<div class="row" style="top:257.9px;height:23.9px"></div>
<div class="row" style="top:305.6px;height:23.9px"></div>
<div class="abs" style="left:0;top:31px;width:228px;height:1px;background:#ddd"></div>
<svg class="abs" style="left:7px;top:7px" width="22" height="22" viewBox="0 0 22 22"><rect x="1.3" y="1.4" width="13.6" height="14.2" fill="#fff" stroke="#8b8f93" stroke-width=".8"/><path d="M1.3 10.9 H14.9" stroke="#8b8f93" stroke-width=".8"/><circle cx="14.5" cy="14.8" r="6.2" fill="#30b445"/></svg>
<div class="t" style="left:31.9px;top:9.1px;font-size:10px;line-height:14px;color:#58616b;font-weight:700;letter-spacing:0.025px;">CHIIL01-IR01-300</div>
<div class="t" style="left:13.0px;top:42.4px;font-size:9.5px;line-height:13px;color:#1f7cab;font-weight:700;letter-spacing:0.001px;">COMMANDS</div>
<svg class="abs" style="left:78px;top:47px" width="10" height="7" viewBox="0 0 10 7"><path d="M1 1 L5 5 L9 1" fill="none" stroke="#1f7cab" stroke-width="1.6"/></svg>
<div class="t" style="left:7.3px;top:72.1px;font-size:9.5px;line-height:13px;color:#777;letter-spacing:-0.007px;">IP Address</div>
<div class="t" style="left:128.3px;top:72.1px;font-size:9.5px;line-height:13px;color:#222;letter-spacing:0.259px;">192.268.122.285</div>
<div class="t" style="left:7.3px;top:95.9px;font-size:9.5px;line-height:13px;color:#777;letter-spacing:0.144px;">Machine Type</div>
<div class="t" style="left:128.3px;top:95.9px;font-size:9.5px;line-height:13px;color:#222;letter-spacing:0.094px;">Juniper SRX300</div>
<div class="t" style="left:7.3px;top:119.7px;font-size:9.5px;line-height:13px;color:#777;letter-spacing:0.054px;">Average Response Time</div>
<div class="t" style="left:128.3px;top:119.7px;font-size:9.5px;line-height:13px;color:#222;letter-spacing:0.166px;">31 ms</div>
<div class="t" style="left:7.3px;top:143.6px;font-size:9.5px;line-height:13px;color:#777;letter-spacing:0.184px;">Percent Memory Used</div>
<div class="t" style="left:128.3px;top:143.6px;font-size:9.5px;line-height:13px;color:#222;letter-spacing:-0.088px;">35 %</div>
<div class="t" style="left:7.3px;top:167.4px;font-size:9.5px;line-height:13px;color:#777;letter-spacing:0.130px;">Overall Hardware Stat...</div>
<div class="t" style="left:7.3px;top:191.2px;font-size:9.5px;line-height:13px;color:#777;letter-spacing:0.064px;">Address</div>
<div class="t" style="left:7.3px;top:215.0px;font-size:9.5px;line-height:13px;color:#777;letter-spacing:0.159px;">BillingId</div>
<div class="t" style="left:128.3px;top:215.0px;font-size:9.5px;line-height:13px;color:#222;letter-spacing:-0.050px;">151</div>
<div class="t" style="left:7.3px;top:238.8px;font-size:9.5px;line-height:13px;color:#777;letter-spacing:-0.015px;">City</div>
<div class="t" style="left:128.3px;top:238.8px;font-size:9.5px;line-height:13px;color:#222;letter-spacing:0.335px;">Chicago</div>
<div class="t" style="left:7.3px;top:262.7px;font-size:9.5px;line-height:13px;color:#777;letter-spacing:0.152px;">Client</div>
<div class="t" style="left:7.3px;top:286.5px;font-size:9.5px;line-height:13px;color:#777;letter-spacing:0.284px;">Comments</div>
<svg class="abs" style="left:125.7px;top:166.5px" width="18" height="18" viewBox="0 0 18 18"><rect x="1" y="1" width="11.6" height="12" fill="#fff" stroke="#9a9ea3" stroke-width=".8"/><path d="M1 6.4 H12.6 M1 9.3 H12.6 M2.5 11.3 H5.5" stroke="#9a9ea3" stroke-width=".8"/><circle cx="11" cy="11" r="4" fill="#30b445"/></svg>
<div class="t" style="left:145.4px;top:167.6px;font-size:9.5px;line-height:13px;color:#222;letter-spacing:0.228px;">Up</div>
<div class="t" style="left:7.4px;top:310.3px;font-size:9.5px;line-height:13px;color:#2a8ac0;letter-spacing:0.282px;">Show more custom properties</div>
</div>
</div></body></html>
